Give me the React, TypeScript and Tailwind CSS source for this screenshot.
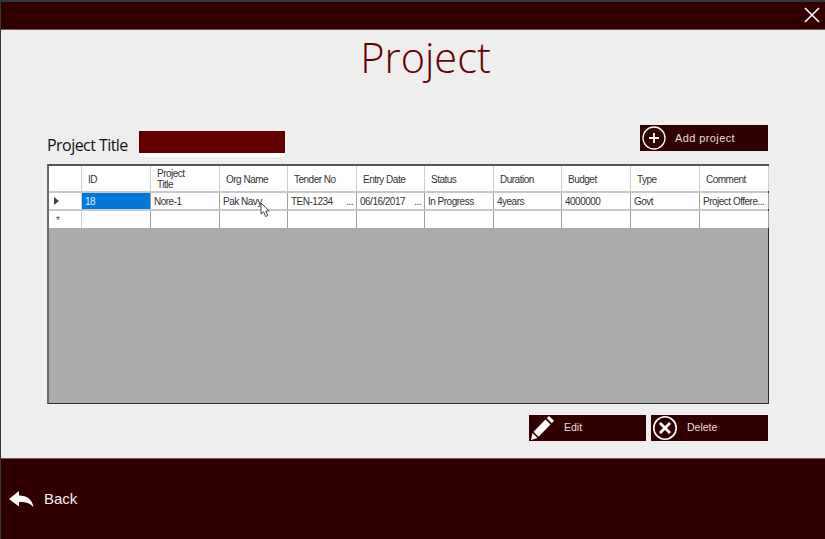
import React from "react";

const cols = [
  { label: "ID", w: "w-[69px]" },
  { label: "Project Title", w: "w-[69px]" },
  { label: "Org Name", w: "w-[68px]" },
  { label: "Tender No", w: "w-[69px]" },
  { label: "Entry Date", w: "w-[68px]" },
  { label: "Status", w: "w-[69px]" },
  { label: "Duration", w: "w-[68px]" },
  { label: "Budget", w: "w-[69px]" },
  { label: "Type", w: "w-[69px]" },
  { label: "Comment", w: "w-[69px]" },
];
const row = ["18", "Nore-1", "Pak Navy", "TEN-1234", "06/16/2017", "In Progress", "4years", "4000000", "Govt", "Project Offere..."];

function Header({ label, w }: { label: string; w: string }) {
  const two = label === "Project Title";
  return (
    <div className={`${w} h-full shrink-0 border-r border-[#d0d0d0] flex items-center pl-[6px] pr-1 pt-[1px] text-[10px] tracking-[-0.5px] leading-[11px] text-[#333]`}>
      {two ? (
        <span>
          Project
          <br />
          Title
        </span>
      ) : (
        label
      )}
    </div>
  );
}

function Cell({ text, w, i }: { text: string; w: string; i: number }) {
  const sel = i === 0;
  const dots = text !== "" && (i === 3 || i === 4);
  return (
    <div
      className={`${w} h-full shrink-0 border-r border-[#a0a0a0] flex items-center pl-[3px] pr-[3px] pt-[1px] text-[10px] tracking-[-0.5px] whitespace-nowrap ${
        sel ? "bg-[#0078d7] text-[#dceeff]" : "text-[#333]"
      }`}
    >
      <span>{text}</span>
      {dots && <span className="ml-auto">...</span>}
    </div>
  );
}

function ActionButton({ w, icon, label, gap }: { w: string; icon: React.ReactNode; label: string; gap: string }) {
  return (
    <button className={`${w} h-[26px] bg-[#300000] flex items-center text-[10.5px] text-[#eadddd] ${gap}`}>
      {icon}
      <span>{label}</span>
    </button>
  );
}

export default function App() {
  return (
    <div className="w-[825px] h-[539px] overflow-hidden bg-[#34343a] pt-[2px] pl-px flex flex-col font-['Liberation_Sans',Arial,sans-serif]">
      <header className="h-[28px] shrink-0 bg-[#300000] border-b border-[#7a5a5a] flex justify-end items-start">
        <svg width="16" height="16" viewBox="0 0 16 16" className="mt-[5px] mr-[5px]" stroke="#fff" strokeWidth="1.6" fill="none">
          <path d="M1 1 L15 15 M15 1 L1 15" />
        </svg>
      </header>

      <main className="flex-1 bg-[#eeeeee] flex flex-col min-h-0">
        <h1 className="text-center text-[41.5px] leading-[54px] pl-[25px] text-[#660000] font-['Open_Sans',sans-serif] font-light">
          Project
        </h1>

        <div className="flex items-start mt-[46px] pl-[46px] pr-[57px] h-[39px]">
          <span className="text-[16px] leading-[18px] text-[#111] mt-[6px] font-['Open_Sans',sans-serif] tracking-[-0.55px]">Project Title</span>
          <div className="ml-[11px] mt-[1px] w-[146px] h-[26px] bg-white">
            <div className="h-[22px] bg-[#620000]" />
          </div>
          <button className="ml-auto w-[128px] h-[26px] -mt-[5px] bg-[#300000] flex items-center text-[11px] text-[#eadddd]">
            <svg width="26" height="26" viewBox="0 0 26 26" className="ml-[1px]" fill="none" stroke="#fff">
              <circle cx="13" cy="13" r="11" strokeWidth="1.3" />
              <path d="M8 13 H18 M13 8 V18" strokeWidth="1.8" />
            </svg>
            <span className="ml-[8px] tracking-[0.4px]">Add project</span>
          </button>
        </div>

        <div className="relative ml-[46px] w-[722px] h-[240px] -mt-[5px] bg-[#ababab] border border-[#2e2e2e] border-t-2 border-l-2 border-l-[#6a6a6a] border-t-[#555]">
          <div className="flex h-[27px] bg-white border-b-2 border-[#c8c8c8]">
            <div className="w-[33px] h-full shrink-0 border-r border-[#d0d0d0]" />
            {cols.map((c) => (
              <Header key={c.label} label={c.label} w={c.w} />
            ))}
          </div>
          <div className="flex h-[18px] bg-white border-b-2 border-[#c8c8c8]">
            <div className="w-[33px] h-full shrink-0 border-r border-[#d0d0d0] flex items-center pl-[5px]">
              <svg width="6" height="8" viewBox="0 0 6 8" fill="#444">
                <path d="M0 0 L5 4 L0 8 Z" />
              </svg>
            </div>
            {cols.map((c, i) => (
              <Cell key={c.label} text={row[i]} w={c.w} i={i} />
            ))}
          </div>
          <div className="flex h-[17px] bg-white">
            <div className="w-[33px] h-full shrink-0 border-r border-[#d0d0d0] flex items-center pl-[7px] text-[10px] leading-none text-[#444]">
              <span className="pt-[3px]">*</span>
            </div>
            {cols.map((c, i) => (
              <Cell key={c.label} text="" w={c.w} i={i + 1} />
            ))}
          </div>
          <svg width="12" height="17" viewBox="0 0 12 17" className="absolute left-[211px] top-[36px]" fill="#fff" stroke="#333" strokeWidth="0.9">
            <path d="M1 1 L1 12 L3.6 9.8 L5.6 14.5 L7.8 13.5 L5.8 9 L9.2 9 Z" />
          </svg>
        </div>

        <div className="flex justify-end gap-[5px] mt-[11px] pr-[57px]">
          <ActionButton
            w="w-[117px]"
            gap="gap-[9px]"
            label="Edit"
            icon={
              <svg width="26" height="26" viewBox="0 0 26 26" fill="#fff">
                <path d="M2 25 L3.5 18 L8.5 23 Z" />
                <path d="M4.5 16.8 L16.5 4.5 L21.5 9.5 L9.5 21.8 Z" />
                <path d="M17.8 3.2 L20 1 L25 5.8 L22.8 8.2 Z" />
              </svg>
            }
          />
          <ActionButton
            w="w-[117px]"
            gap="gap-[9px]"
            label="Delete"
            icon={
              <svg width="26" height="26" viewBox="0 0 26 26" fill="none" stroke="#fff" className="ml-px">
                <circle cx="13" cy="13" r="11.2" strokeWidth="1.6" />
                <path d="M8 8 L18 18 M18 8 L8 18" strokeWidth="2.8" />
              </svg>
            }
          />
        </div>
      </main>

      <footer className="h-[81px] shrink-0 bg-[#300000] border-t border-[#7a5a5a] flex items-center pl-[8px]">
        <svg width="25" height="17" viewBox="0 0 25 17" fill="#fff">
          <path d="M0 8 L10 0 L10 4.5 C18 4.5 23.5 8.5 24.5 16.5 C21.5 12 17 10.8 10 11 L10 15.5 Z" />
        </svg>
        <span className="ml-[10px] text-[15px] text-[#f5eeee]">Back</span>
      </footer>
    </div>
  );
}
